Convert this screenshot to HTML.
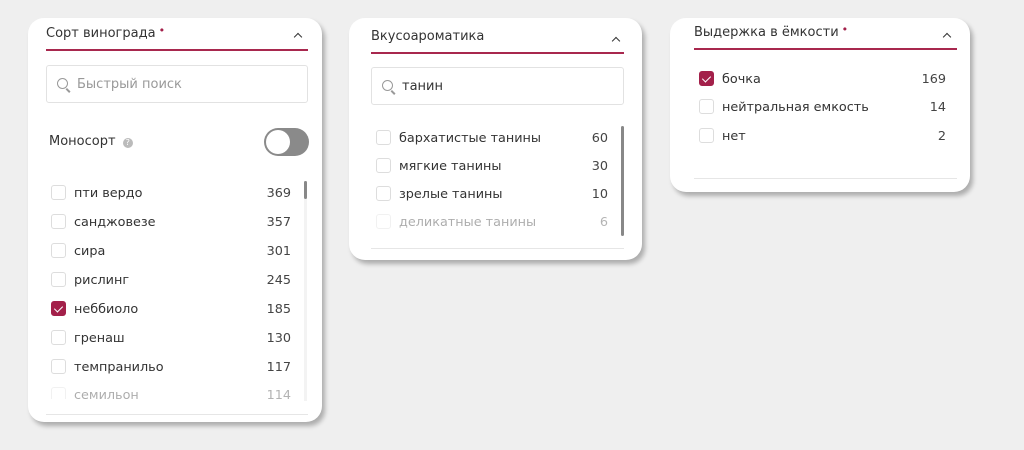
<!DOCTYPE html><html><head><meta charset="utf-8"><style>
*{box-sizing:border-box;margin:0;padding:0}
body{width:1024px;height:450px;background:#efefef;font-family:"DejaVu Sans","Liberation Sans",sans-serif;color:#333;position:relative;overflow:hidden}
.card{position:absolute;background:#fff;border-radius:16px;box-shadow:3px 4px 5px rgba(0,0,0,.28)}
.a{position:absolute}
.h{font-size:13px;color:#333;white-space:nowrap}
.h b{color:#a3204a;font-weight:normal;font-size:11px;position:relative;top:-3px;margin-left:3px}
.ul{position:absolute;height:2px;background:#a8284e}
.chev{position:absolute;width:6px;height:6px;border-left:1.3px solid #333;border-top:1.3px solid #333;transform:rotate(45deg)}
.sl{position:absolute;height:1px;background:#e6e6e6}
.row{position:absolute;font-size:12.8px;height:16px;line-height:16px}
.row .t,.row .n{top:1px}
.cb{position:absolute;left:0;top:0;width:15px;height:15px;border:1px solid #ddd;border-radius:3px;background:#fff}
.cb.on{background:#a3204a;border-color:#a3204a}
.cb.on:after{content:"";position:absolute;left:4px;top:2px;width:4px;height:7px;border-right:1.5px solid #fff;border-bottom:1.5px solid #fff;transform:rotate(45deg)}
.t{position:absolute;left:23px;top:0;white-space:nowrap;color:#333}
.n{position:absolute;right:0;top:0;color:#444}
.f{opacity:.4}
.search{position:absolute;border:1px solid #e2e2e2;border-radius:3px;height:38px}
.search .ic{position:absolute;left:10px;top:12px;width:11px;height:11px;border:1.5px solid #999;border-radius:50%}
.search .ic:after{content:"";position:absolute;left:9px;top:9px;width:5px;height:1.5px;background:#999;transform:rotate(45deg);transform-origin:0 0}
.search span{position:absolute;left:30px;top:11px;font-size:13px}
.sb{position:absolute;width:3px;background:#888;border-radius:2px}
.tr{position:absolute;width:3px;background:#f3f3f3}
</style></head><body>

<div class="card" style="left:28px;top:18px;width:294px;height:404px">
 <div class="a h" style="left:18px;top:8px">Сорт винограда<b>•</b></div>
 <div class="chev" style="left:267px;top:16px"></div>
 <div class="ul" style="left:18px;top:31px;width:262px"></div>
 <div class="search" style="left:18px;top:47px;width:262px"><div class="ic"></div><span style="color:#999">Быстрый поиск</span></div>
 <div class="a" style="left:21px;top:116px;font-size:13px;color:#333">Моносорт <span style="display:inline-block;width:10px;height:10px;border-radius:50%;background:#bbb;color:#fff;font-size:8px;line-height:10px;text-align:center;vertical-align:0;margin-left:3px">?</span></div>
 <div class="a" style="left:236px;top:110px;width:45px;height:28px;border-radius:14px;background:#8a8a8a"><div class="a" style="left:2px;top:2px;width:24px;height:24px;border-radius:50%;background:#fff"></div></div>
 <div class="tr" style="left:276px;top:163px;height:220px"></div>
 <div class="sb" style="left:276px;top:163px;height:18px"></div>
 <div class="row" style="left:23px;top:167px;width:240px"><div class="cb"></div><div class="t">пти вердо</div><div class="n">369</div></div>
 <div class="row" style="left:23px;top:196px;width:240px"><div class="cb"></div><div class="t">санджовезе</div><div class="n">357</div></div>
 <div class="row" style="left:23px;top:225px;width:240px"><div class="cb"></div><div class="t">сира</div><div class="n">301</div></div>
 <div class="row" style="left:23px;top:254px;width:240px"><div class="cb"></div><div class="t">рислинг</div><div class="n">245</div></div>
 <div class="row" style="left:23px;top:283px;width:240px"><div class="cb on"></div><div class="t">неббиоло</div><div class="n">185</div></div>
 <div class="row" style="left:23px;top:312px;width:240px"><div class="cb"></div><div class="t">гренаш</div><div class="n">130</div></div>
 <div class="row" style="left:23px;top:341px;width:240px"><div class="cb"></div><div class="t">темпранильо</div><div class="n">117</div></div>
 <div class="row f" style="left:23px;top:369px;width:240px;height:12px;overflow:hidden"><div class="cb"></div><div class="t">семильон</div><div class="n">114</div></div>
 <div class="sl" style="left:18px;top:396px;width:262px"></div>
</div>

<div class="card" style="left:349px;top:18px;width:293px;height:242px">
 <div class="a h" style="left:22px;top:11px">Вкусоароматика</div>
 <div class="chev" style="left:264px;top:20px"></div>
 <div class="ul" style="left:22px;top:34px;width:253px"></div>
 <div class="search" style="left:22px;top:49px;width:253px"><div class="ic"></div><span style="color:#333">танин</span></div>
 <div class="sb" style="left:272px;top:108px;height:110px"></div>
 <div class="row" style="left:27px;top:112px;width:232px"><div class="cb"></div><div class="t">бархатистые танины</div><div class="n">60</div></div>
 <div class="row" style="left:27px;top:140px;width:232px"><div class="cb"></div><div class="t">мягкие танины</div><div class="n">30</div></div>
 <div class="row" style="left:27px;top:168px;width:232px"><div class="cb"></div><div class="t">зрелые танины</div><div class="n">10</div></div>
 <div class="row f" style="left:27px;top:196px;width:232px"><div class="cb"></div><div class="t">деликатные танины</div><div class="n">6</div></div>
 <div class="sl" style="left:22px;top:230px;width:253px"></div>
</div>

<div class="card" style="left:670px;top:18px;width:300px;height:174px">
 <div class="a h" style="left:24px;top:7px">Выдержка в ёмкости<b>•</b></div>
 <div class="chev" style="left:274px;top:16px"></div>
 <div class="ul" style="left:24px;top:30px;width:263px"></div>
 <div class="row" style="left:29px;top:53px;width:247px"><div class="cb on"></div><div class="t">бочка</div><div class="n">169</div></div>
 <div class="row" style="left:29px;top:81px;width:247px"><div class="cb"></div><div class="t">нейтральная емкость</div><div class="n">14</div></div>
 <div class="row" style="left:29px;top:110px;width:247px"><div class="cb"></div><div class="t">нет</div><div class="n">2</div></div>
 <div class="sl" style="left:24px;top:160px;width:263px"></div>
</div>
</body></html>
